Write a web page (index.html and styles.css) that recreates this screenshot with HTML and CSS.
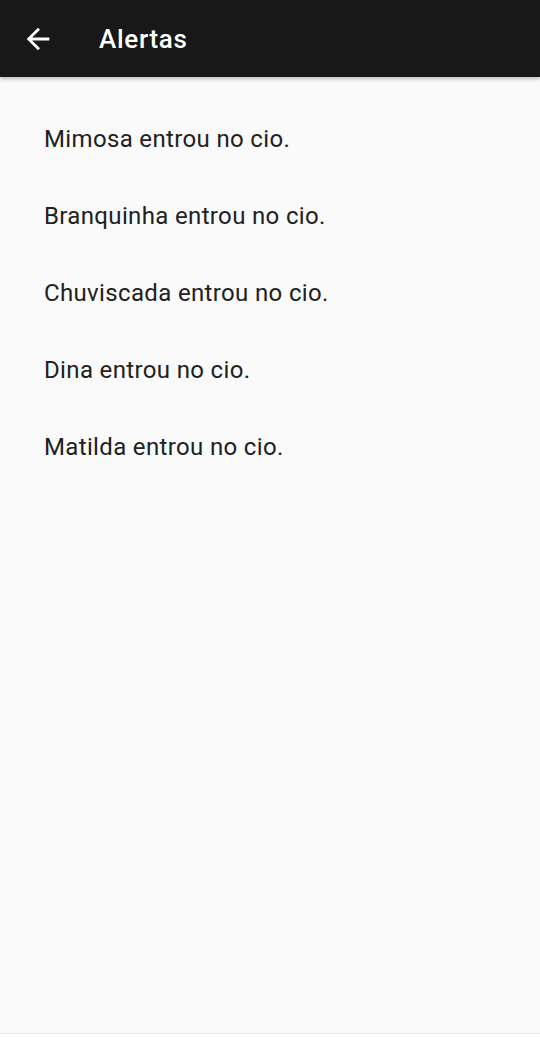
FILE: index.html
```html
<!DOCTYPE html>
<html lang="pt">
<head>
<meta charset="utf-8">
<link rel="stylesheet" href="styles.css">
</head>
<body>
<div class="screen">
  <header class="appbar">
    <span class="back">
      <svg width="34" height="34" viewBox="0 0 24 24"><path d="M20 11H7.83l5.59-5.59L12 4l-8 8 8 8 1.41-1.41L7.83 13H20v-2z" fill="#fff"/></svg>
    </span>
    <h1 class="title">Alertas</h1>
  </header>
  <ul class="list">
    <li class="item">Mimosa entrou no cio.</li>
    <li class="item">Branquinha entrou no cio.</li>
    <li class="item">Chuviscada entrou no cio.</li>
    <li class="item">Dina entrou no cio.</li>
    <li class="item">Matilda entrou no cio.</li>
  </ul>
</div>
<div class="bottom"></div>
</body>
</html>
```
FILE: styles.css
```css
html, body { margin: 0; padding: 0; }
body { font-family: Roboto, "Noto Sans", sans-serif; background: #fff; width: 540px; height: 1037px; overflow: hidden; }
.screen { height: 1034px; background: #fafafa; border-bottom: 1px solid #e8e8e8; box-sizing: border-box; }
.appbar { height: 77px; background: #181818; display: flex; align-items: center; box-shadow: 0 2px 4px rgba(0,0,0,0.25); position: relative; }
.back { width: 34px; height: 34px; margin-left: 21px; display: flex; }
.title { margin: 0 0 0 44px; color: #fff; font-size: 26px; font-weight: 500; letter-spacing: 0.7px; }
.list { list-style: none; margin: 0; padding: 23px 0 0 0; }
.item { height: 77px; display: flex; align-items: center; padding-left: 44px; font-size: 24px; letter-spacing: 0.35px; color: #212121; }
```
